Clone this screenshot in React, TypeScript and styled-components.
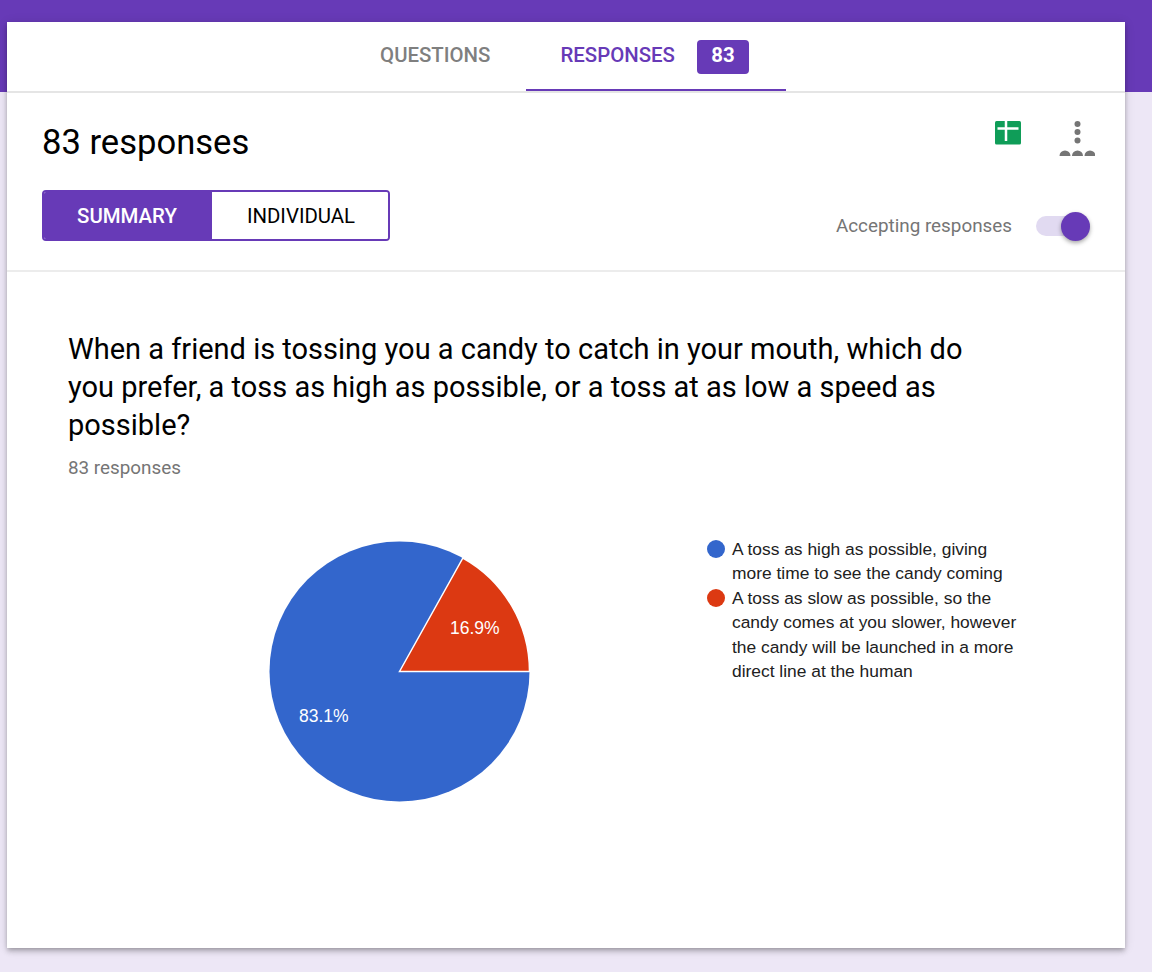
import React, { ReactElement } from 'react'
import styled, { createGlobalStyle } from 'styled-components'

const GlobalStyle = createGlobalStyle`
  html, body {
    margin: 0;
    padding: 0;
  }
  body {
    font-family: Roboto, "Liberation Sans", sans-serif;
    background: #ede7f6;
  }
`

const Page = styled.div`
  box-sizing: border-box;
  width: 1152px;
  height: 972px;
  padding: 22px 27px 24px 7px;
  background: linear-gradient(#673ab7 92px, #ede7f6 92px);
  overflow: hidden;
`

const Card = styled.div`
  height: 926px;
  background: #fff;
  box-shadow: 0 2px 4px -1px rgba(0, 0, 0, 0.2), 0 4px 5px 0 rgba(0, 0, 0, 0.14),
    0 1px 10px 0 rgba(0, 0, 0, 0.12);
`

const TabBar = styled.div`
  box-sizing: border-box;
  height: 71px;
  display: flex;
  justify-content: center;
  border-bottom: 2px solid #e5e5e5;
`

const Tab = styled.div<{ active?: boolean }>`
  box-sizing: border-box;
  height: 69px;
  padding: 0 ${({ active }) => (active ? '37px' : '36px')} 2px 34px;
  display: flex;
  align-items: center;
  gap: 22px;
  font-size: 20.4px;
  font-weight: 500;
  color: ${({ active }) => (active ? '#673ab7' : '#7f7f7f')};
  border-bottom: 2px solid ${({ active }) => (active ? '#673ab7' : 'transparent')};
`

const Badge = styled.span`
  box-sizing: border-box;
  width: 52px;
  height: 34px;
  margin-top: 5px;
  padding-bottom: 5px;
  display: flex;
  align-items: center;
  justify-content: center;
  background: #673ab7;
  color: #fff;
  border-radius: 4px;
  font-size: 20.4px;
  font-weight: 700;
`

const SummaryHeader = styled.div`
  box-sizing: border-box;
  height: 179px;
  padding: 27px 35px 0 35px;
  display: flex;
  justify-content: space-between;
  border-bottom: 2px solid #ececec;
`

const HeaderLeft = styled.div`
  display: flex;
  flex-direction: column;
  align-items: flex-start;
`

const Title = styled.h1`
  margin: 0;
  height: 44px;
  line-height: 44px;
  font-size: 34.6px;
  font-weight: 400;
  color: #000;
`

const Segments = styled.div`
  box-sizing: border-box;
  margin-top: 26px;
  width: 348px;
  height: 51px;
  display: flex;
  border: 2px solid #673ab7;
  border-radius: 4px;
  overflow: hidden;
`

const Segment = styled.div<{ selected?: boolean }>`
  width: ${({ selected }) => (selected ? '168px' : '176px')};
  padding: ${({ selected }) => (selected ? '0 2px 0 0' : '0 0 0 2px')};
  box-sizing: border-box;
  display: flex;
  align-items: center;
  justify-content: center;
  font-size: 20.4px;
  color: ${({ selected }) => (selected ? '#fff' : '#000')};
  background: ${({ selected }) => (selected ? '#673ab7' : '#fff')};
  font-weight: ${({ selected }) => (selected ? 500 : 400)};
`

const HeaderRight = styled.div`
  display: flex;
  flex-direction: column;
  align-items: flex-end;
`

const IconRow = styled.div`
  display: flex;
  align-items: flex-start;
  gap: 38px;
  margin-top: 1px;
  margin-right: -5px;
`

const AcceptingRow = styled.div`
  display: flex;
  align-items: center;
  gap: 24px;
  margin-top: 58px;
`

const AcceptingLabel = styled.span`
  font-size: 18.85px;
  color: #757575;
`

const Toggle = styled.div`
  position: relative;
  width: 54px;
  height: 20px;
  border-radius: 10px;
  background: #e1daf1;
`

const Knob = styled.div`
  position: absolute;
  right: 0;
  top: -4.5px;
  width: 29px;
  height: 29px;
  border-radius: 50%;
  background: #673ab7;
  box-shadow: 0 2px 4px rgba(0, 0, 0, 0.35);
`

const QuestionSection = styled.div`
  padding: 58px 0 0 61px;
`

const Question = styled.h2`
  margin: 0;
  width: 920px;
  font-size: 29px;
  line-height: 38px;
  font-weight: 400;
  color: #000;
`

const ResponseCount = styled.div`
  margin-top: 12px;
  font-size: 18.85px;
  line-height: 24px;
  color: #757575;
`

const ChartRow = styled.div`
  display: flex;
  align-items: flex-start;
  margin-top: 61px;
  padding-left: 201px;
`

const Legend = styled.div`
  margin-left: 176px;
  margin-top: -4px;
  font-family: "Liberation Sans", Arial, sans-serif;
  font-size: 17.4px;
  line-height: 24.4px;
  color: #212121;
`

const LegendItem = styled.div`
  display: flex;
  gap: 7px;
`

const Dot = styled.span<{ color: string }>`
  flex: none;
  width: 18px;
  height: 18px;
  margin-top: 3px;
  border-radius: 50%;
  background: ${({ color }) => color};
`

const LegendText = styled.div`
  width: 300px;
`

const SheetsIcon = (): ReactElement => (
  <svg width="26" height="24" viewBox="0 0 26 24">
    <rect width="26" height="23.500" rx="1.5" fill="#0f9d58" />
    <path d="M2.500 7.500h21M11 0v20" stroke="#fff" strokeWidth="2.500" fill="none" />
  </svg>
)

const MoreIcon = (): ReactElement => (
  <svg width="36" height="36" viewBox="0 0 36 36">
    <g fill="#757575">
      <circle cx="18.500" cy="3" r="3" />
      <circle cx="18.500" cy="11" r="3" />
      <circle cx="18.500" cy="19.500" r="3" />
      <path d="M0.500 35a5.500 5.500 0 0 1 11 0zM13 35a5.500 5.500 0 0 1 11 0zM25.500 35a5.500 5.500 0 0 1 11 0z" />
    </g>
  </svg>
)

const PieChart = (): ReactElement => (
  <svg width="262" height="262" viewBox="0 0 262 262">
    <circle cx="130.500" cy="130.500" r="130" fill="#3366cc" />
    <path
      d="M130.500 130.500L193.900 17A130 130 0 0 1 260.500 130.500Z"
      fill="#dc3912"
      stroke="#fff"
      strokeWidth="1.5"
    />
    <g fontFamily="'Liberation Sans', Arial, sans-serif" fontSize="17.5" fill="#fff">
      <text x="181" y="93">16.9%</text>
      <text x="30" y="181">83.1%</text>
    </g>
  </svg>
)

const App = (): ReactElement => (
  <Page>
    <GlobalStyle />
    <Card>
      <TabBar>
        <Tab>QUESTIONS</Tab>
        <Tab active>
          RESPONSES
          <Badge>83</Badge>
        </Tab>
      </TabBar>
      <SummaryHeader>
        <HeaderLeft>
          <Title>83 responses</Title>
          <Segments>
            <Segment selected>SUMMARY</Segment>
            <Segment>INDIVIDUAL</Segment>
          </Segments>
        </HeaderLeft>
        <HeaderRight>
          <IconRow>
            <SheetsIcon />
            <MoreIcon />
          </IconRow>
          <AcceptingRow>
            <AcceptingLabel>Accepting responses</AcceptingLabel>
            <Toggle>
              <Knob />
            </Toggle>
          </AcceptingRow>
        </HeaderRight>
      </SummaryHeader>
      <QuestionSection>
        <Question>
          When a friend is tossing you a candy to catch in your mouth, which do
          you prefer, a toss as high as possible, or a toss at as low a speed as
          possible?
        </Question>
        <ResponseCount>83 responses</ResponseCount>
        <ChartRow>
          <PieChart />
          <Legend>
            <LegendItem>
              <Dot color="#3366cc" />
              <LegendText>
                A toss as high as possible, giving
                <br />
                more time to see the candy coming
              </LegendText>
            </LegendItem>
            <LegendItem>
              <Dot color="#dc3912" />
              <LegendText>
                A toss as slow as possible, so the
                <br />
                candy comes at you slower, however
                <br />
                the candy will be launched in a more
                <br />
                direct line at the human
              </LegendText>
            </LegendItem>
          </Legend>
        </ChartRow>
      </QuestionSection>
    </Card>
  </Page>
)

export default App
